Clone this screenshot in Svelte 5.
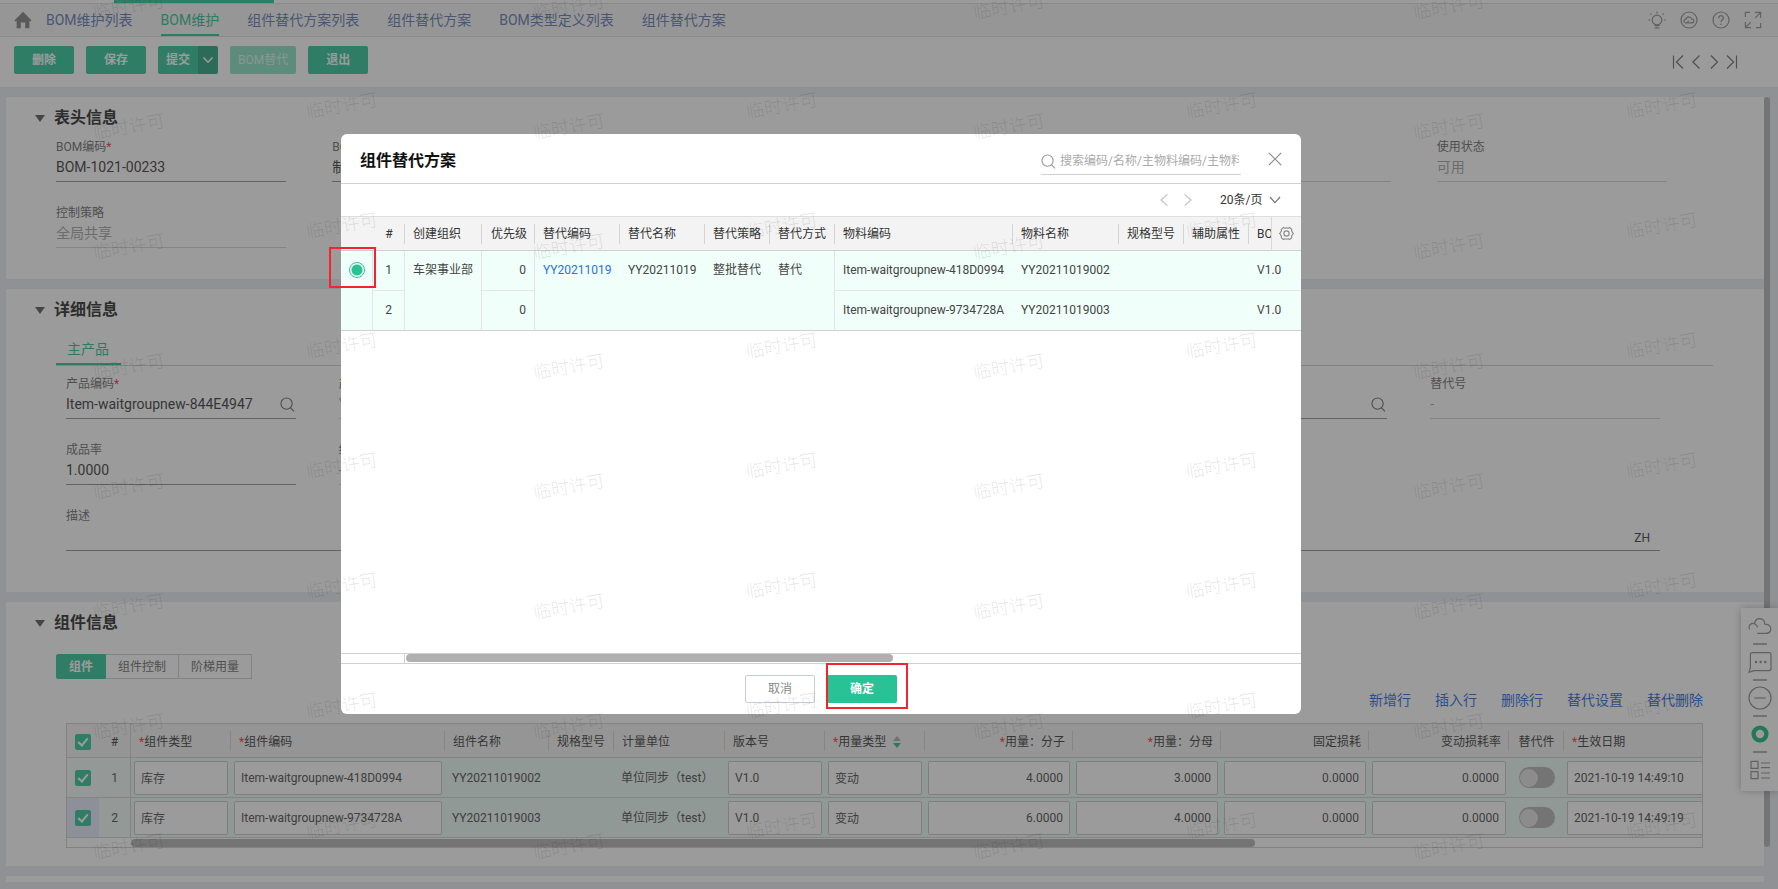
<script>
  let tabs = ['BOM维护列表', 'BOM维护', '组件替代方案列表', '组件替代方案', 'BOM类型定义列表', '组件替代方案']
  let activeTab = 1

  // ── Form fields ───────────────────────────────────────────────────────────

  const headFields = [
    { id: 'bomCode',   label: 'BOM编码',  value: 'BOM-1021-00233', required: true },
    { id: 'bomType',   label: 'BOM类型',  value: '制造BOM' },
    { id: 'org',       label: '创建组织', value: '车架事业部', disabled: true },
    { id: 'version',   label: '版本号',   value: 'V1.0' },
    { id: 'source',    label: '来源',     value: '', disabled: true },
    { id: 'useState',  label: '使用状态', value: '可用', disabled: true },
    { id: 'strategy',  label: '控制策略', value: '全局共享', disabled: true },
  ]

  const productFields = [
    { id: 'prodCode',  label: '产品编码', value: 'Item-waitgroupnew-844E4947', required: true, search: true },
    { id: 'prodName',  label: '产品名称', value: 'YY20211019001', disabled: true },
    { id: 'spec',      label: '规格型号', value: '', disabled: true },
    { id: 'unit',      label: '计量单位', value: '', disabled: true },
    { id: 'prodRoute', label: '工艺路线', value: '', search: true },
    { id: 'altNo',     label: '替代号',   value: '-', disabled: true },
    { id: 'yieldRate', label: '成品率',   value: '1.0000' },
    { id: 'endVer',    label: '终止版本', value: '-', disabled: true },
  ]

  // ── Component grid ────────────────────────────────────────────────────────

  const segments = ['组件', '组件控制', '阶梯用量']
  let activeSegment = '组件'

  const gridActions = ['新增行', '插入行', '删除行', '替代设置', '替代删除']

  const gridWidths = [32, 32, 100, 214, 104, 65, 111, 100, 100, 148, 148, 148, 140, 55]

  let rows = [
    { checked: true, code: 'Item-waitgroupnew-418D0994', name: 'YY20211019002', num: '4.0000', den: '3.0000', date: '2021-10-19 14:49:10', alt: false },
    { checked: true, code: 'Item-waitgroupnew-9734728A', name: 'YY20211019003', num: '6.0000', den: '4.0000', date: '2021-10-19 14:49:19', alt: false },
  ]

  $: allChecked = rows.every(r => r.checked)

  function toggleAll() {
    const next = !allChecked
    rows = rows.map(r => ({ ...r, checked: next }))
  }

  // ── Dialog ────────────────────────────────────────────────────────────────

  const planWidths = [32, 32, 77, 53, 85, 85, 65, 65, 178, 106, 65, 65, 22]
  const planHeads  = ['替代编码', '替代名称', '替代策略', '替代方式', '物料编码', '物料名称', '规格型号', '辅助属性']

  let plan = '1'
  let keyword = ''

  // ── Watermark ─────────────────────────────────────────────────────────────
  // Two interleaved columns repeat every 440px across and 120px down.

  const marks = []
  for (let col = 0; col < 4; col++) {
    for (let row = 0; row < 8; row++) {
      marks.push({ x: 129 + col * 440, y: 7 + row * 120 })
      marks.push({ x: 342 + col * 440, y: 106 + row * 120 })
    }
  }
</script>

{#snippet magnifier()}
  <svg class="magnifier" viewBox="0 0 16 16" aria-hidden="true">
    <circle cx="7" cy="7" r="6" /><path d="M11.2 11.5 15 15.4" />
  </svg>
{/snippet}

{#snippet fieldBox(f)}
  <div class="field" class:disabled={f.disabled}>
    <label for={f.id}>{f.label}{#if f.required}<i>*</i>{/if}</label>
    <div class="field-line">
      <input id={f.id} type="text" value={f.value} disabled={f.disabled} />
      {#if f.search}
        <button class="bare lookup" aria-label="查询">{@render magnifier()}</button>
      {/if}
    </div>
  </div>
{/snippet}

<div class="page">
  <div class="strip"><span></span></div>

  <nav class="tabs">
    <a class="home" href="#home" aria-label="首页">
      <svg viewBox="0 0 18 18"><path d="M9 .8 17.6 9.4 16.4 10.6 15.4 9.8V17.2H11.2V11.6H6.8V17.2H2.6V9.8L1.6 10.6.4 9.4Z" /></svg>
    </a>
    {#each tabs as tab, i}
      <a href="#tab{i}" class="tab" class:active={i === activeTab} on:click|preventDefault={() => (activeTab = i)}>{tab}</a>
    {/each}
    <div class="tools">
      <button class="bare" aria-label="提示">
        <svg viewBox="0 0 18 18"><circle cx="9" cy="9" r="4.8" /><path d="M9 .4V2.4M.4 9H2.2M15.8 9H17.6M2.2 2.4 3.4 3.6M15.8 2.4 14.6 3.6M6.6 14.6H11.4M6.6 16.8H11.4M7 13V14.4M11 13V14.4" /></svg>
      </button>
      <button class="bare" aria-label="云服务">
        <svg viewBox="0 0 18 18"><circle cx="9" cy="9" r="8" /><path d="M4.6 11.6C3.2 10.4 4 8 6 8.2 6.6 5.2 10.8 5.2 11.6 8.2 14.2 7.8 14.6 11.4 12.4 11.8H8.2M8.8 9.8 7 11.8H5" /></svg>
      </button>
      <button class="bare" aria-label="帮助">
        <svg viewBox="0 0 18 18"><circle cx="9" cy="9" r="8" /><path d="M6.6 7.2C6.6 3.8 11.4 4 11.4 7 11.4 8.8 9 8.8 9 11M9 12.6V14" /></svg>
      </button>
      <button class="bare" aria-label="全屏">
        <svg viewBox="0 0 18 18"><path d="M1.4 6V1.4H6M11 1.4H16.6V7M16.4 1.6 11.2 6.8M1.4 11V16.6H7M1.6 16.4 6.8 11.2M16.6 12V16.6H12" /></svg>
      </button>
    </div>
  </nav>

  <div class="toolbar">
    <button class="btn">删除</button>
    <button class="btn">保存</button>
    <div class="split">
      <button class="btn">提交</button>
      <button class="btn more" aria-label="更多提交操作">
        <svg viewBox="0 0 12 8"><path d="M1.5 1.5 6 6.2 10.5 1.5" /></svg>
      </button>
    </div>
    <button class="btn muted" disabled>BOM替代</button>
    <button class="btn">退出</button>
    <div class="record-nav">
      <button class="bare" aria-label="首条"><svg viewBox="0 0 12 14"><path d="M1.5 .5V13.5M11 .5 4.4 7 11 13.5" /></svg></button>
      <button class="bare" aria-label="上一条"><svg viewBox="0 0 12 14"><path d="M9.5 .5 2.9 7 9.5 13.5" /></svg></button>
      <button class="bare" aria-label="下一条"><svg viewBox="0 0 12 14"><path d="M2.9 .5 9.5 7 2.9 13.5" /></svg></button>
      <button class="bare" aria-label="末条"><svg viewBox="0 0 12 14"><path d="M10.5 .5V13.5M1 .5 7.6 7 1 13.5" /></svg></button>
    </div>
  </div>

  <main>
    <div class="cards">
      <section class="card">
        <h2>表头信息</h2>
        <div class="fields head">
          {#each headFields as f}{@render fieldBox(f)}{/each}
        </div>
      </section>

      <section class="card">
        <h2>详细信息</h2>
        <div class="subtabs"><a href="#main-product">主产品</a></div>
        <div class="fields product">
          {#each productFields as f}{@render fieldBox(f)}{/each}
          <div class="field wide">
            <label for="remark">描述</label>
            <div class="field-line">
              <input id="remark" type="text" />
              <button class="bare lang">ZH</button>
            </div>
          </div>
        </div>
      </section>

      <section class="card grid-card">
        <h2>组件信息</h2>
        <div class="segments">
          {#each segments as s}
            <button class:active={s === activeSegment} on:click={() => (activeSegment = s)}>{s}</button>
          {/each}
        </div>
        <div class="grid-actions">
          {#each gridActions as a}<button class="bare">{a}</button>{/each}
        </div>
        <div class="grid-box">
          <table class="grid">
            <colgroup>
              {#each gridWidths as w}<col style="width: {w}px" />{/each}
              <col />
            </colgroup>
            <thead>
              <tr>
                <th class="mid"><input type="checkbox" checked={allChecked} on:change={toggleAll} aria-label="全选" /></th>
                <th class="mid fixed">#</th>
                <th class="sep"><i>*</i>组件类型</th>
                <th class="sep"><i>*</i>组件编码</th>
                <th class="sep">组件名称</th>
                <th class="sep">规格型号</th>
                <th class="sep">计量单位</th>
                <th class="sep">版本号</th>
                <th class="sep"><i>*</i>用量类型
                  <svg class="sort" viewBox="0 0 8 12"><path class="up" d="M4 0 8 5H0Z" /><path class="down" d="M0 7H8L4 12Z" /></svg>
                </th>
                <th class="sep num"><i>*</i>用量：分子</th>
                <th class="sep num"><i>*</i>用量：分母</th>
                <th class="sep num">固定损耗</th>
                <th class="sep num">变动损耗率</th>
                <th class="sep mid">替代件</th>
                <th><i>*</i>生效日期</th>
              </tr>
            </thead>
            <tbody>
              {#each rows as r, i}
                <tr>
                  <td class="mid lock" class:focus={i === 1}><input type="checkbox" bind:checked={r.checked} aria-label="选择第{i + 1}行" /></td>
                  <td class="mid lock fixed">{i + 1}</td>
                  <td class="edit"><input type="text" value="库存" aria-label="组件类型" /></td>
                  <td class="edit"><input type="text" bind:value={r.code} aria-label="组件编码" /></td>
                  <td>{r.name}</td>
                  <td></td>
                  <td>单位同步（test）</td>
                  <td class="edit"><input type="text" value="V1.0" aria-label="版本号" /></td>
                  <td class="edit"><input type="text" value="变动" aria-label="用量类型" /></td>
                  <td class="edit num"><input type="text" bind:value={r.num} aria-label="用量：分子" /></td>
                  <td class="edit num"><input type="text" bind:value={r.den} aria-label="用量：分母" /></td>
                  <td class="edit num"><input type="text" value="0.0000" aria-label="固定损耗" /></td>
                  <td class="edit num"><input type="text" value="0.0000" aria-label="变动损耗率" /></td>
                  <td class="mid"><input class="switch" type="checkbox" role="switch" bind:checked={r.alt} aria-label="替代件" /></td>
                  <td class="edit last"><input type="text" bind:value={r.date} aria-label="生效日期" /></td>
                </tr>
              {/each}
            </tbody>
          </table>
          <div class="hscroll"><span></span></div>
        </div>
      </section>

      <section class="card rest"></section>
    </div>
    <div class="vscroll"><span></span></div>
  </main>

  <aside class="dock">
    <button class="bare" aria-label="云"><svg viewBox="0 0 24 24"><path d="M1.6 15.4C-.2 11.4 3.4 8.2 7 10 8.4 11 9.4 11.8 9.6 13.4M6.4 9.8C7.4 2.6 16.6 3 16.8 10.2 21.4 10 23.4 13 22.6 16 22 18.8 20 19.4 17.6 19.4H9.2" /></svg></button>
    <hr />
    <button class="bare" aria-label="消息"><svg viewBox="0 0 24 24"><path d="M4.4 2.6H21Q23 2.6 23 4.6V18.6Q23 20.6 21 20.6H6L1 22.4 2.4 17.4V4.6Q2.4 2.6 4.4 2.6Z" /><path class="dots" d="M8 12H8.1M12.6 12H12.7M17.2 12H17.3" /></svg></button>
    <hr />
    <button class="bare" aria-label="收起"><svg viewBox="0 0 24 24"><circle cx="12" cy="12" r="11" /><path d="M6.4 12H17.6" /></svg></button>
    <hr />
    <button class="bare" aria-label="状态"><svg viewBox="0 0 24 24"><circle class="ring" cx="12" cy="12" r="6.4" /></svg></button>
    <hr />
    <button class="bare" aria-label="目录"><svg viewBox="0 0 24 24"><path d="M3 3.4H10V10.4H3ZM3 13.6H10V20.6H3ZM13 5H22M13 9.6H22M13 15H22M13 20H22" /></svg></button>
  </aside>

  <div class="mask"></div>

  <div class="dialog" role="dialog" aria-labelledby="dialog-title">
    <header>
      <h1 id="dialog-title">组件替代方案</h1>
      <div class="search">
        {@render magnifier()}
        <input type="text" bind:value={keyword} placeholder="搜索编码/名称/主物料编码/主物料名称" aria-label="搜索" />
      </div>
      <button class="bare close" aria-label="关闭"><svg viewBox="0 0 14 14"><path d="M.8 .8 13.2 13.2M13.2 .8 .8 13.2" /></svg></button>
    </header>

    <div class="pager">
      <button class="bare" disabled aria-label="上一页"><svg viewBox="0 0 8 12"><path d="M7.4 .4 1 6 7.4 11.6" /></svg></button>
      <button class="bare" disabled aria-label="下一页"><svg viewBox="0 0 8 12"><path d="M.6 .4 7 6 .6 11.6" /></svg></button>
      <div class="page-size">
        <select aria-label="每页条数"><option>20条/页</option><option>50条/页</option></select>
        <svg viewBox="0 0 12 8"><path d="M1 1 6 6.6 11 1" /></svg>
      </div>
    </div>

    <div class="plan-box">
      <table class="plan">
        <colgroup>
          {#each planWidths as w}<col style="width: {w}px" />{/each}
          <col />
        </colgroup>
        <thead>
          <tr>
            <th></th>
            <th class="sep mid">#</th>
            <th class="sep">创建组织</th>
            <th class="sep num">优先级</th>
            {#each planHeads as h}<th class="sep">{h}</th>{/each}
            <th class="cut">BOM</th>
            <th class="gear">
              <button class="bare" aria-label="列设置">
                <svg viewBox="0 0 16 16"><path d="M4.6 1.6 6 2.4Q8 1.6 10 2.4L11.4 1.6 13.6 3.6 13.4 5.2Q14.2 6 14.4 7L15.4 8 14.4 9Q14.2 10 13.4 10.8L13.6 12.4 11.4 14.4 10 13.6Q8 14.4 6 13.6L4.6 14.4 2.4 12.4 2.6 10.8Q1.8 10 1.6 9L.6 8 1.6 7Q1.8 6 2.6 5.2L2.4 3.6Z" /><circle cx="8" cy="8" r="2.8" /></svg>
              </button>
            </th>
          </tr>
        </thead>
        <tbody>
          <tr>
            <td rowspan="2" class="mid line end"><input type="radio" name="plan" value="1" bind:group={plan} aria-label="选择方案YY20211019" /></td>
            <td class="mid line">1</td>
            <td rowspan="2" class="line end">车架事业部</td>
            <td class="num line">0</td>
            <td rowspan="2" class="end"><a href="#plan">YY20211019</a></td>
            <td rowspan="2" class="end">YY20211019</td>
            <td rowspan="2" class="end">整批替代</td>
            <td rowspan="2" class="line end">替代</td>
            <td>Item-waitgroupnew-418D0994</td>
            <td>YY20211019002</td>
            <td></td>
            <td></td>
            <td colspan="2">V1.0</td>
          </tr>
          <tr class="end">
            <td class="mid line">2</td>
            <td class="num line">0</td>
            <td>Item-waitgroupnew-9734728A</td>
            <td>YY20211019003</td>
            <td></td>
            <td></td>
            <td colspan="2">V1.0</td>
          </tr>
        </tbody>
      </table>
    </div>
    <div class="plan-scroll"><div></div><span></span></div>

    <footer>
      <button class="btn cancel">取消</button>
      <div class="confirm">
        <button class="btn">确定</button>
        <span class="frame frame-ok"></span>
      </div>
    </footer>
    <span class="frame frame-radio"></span>
  </div>

  <svg class="watermark" aria-hidden="true">
    {#each marks as m}
      <text transform="translate({m.x} {m.y}) rotate(-10)" text-anchor="middle" dy="6">临时许可</text>
    {/each}
  </svg>
</div>

<style>
  :global(body) {
    margin:      0;
    background:  #e9ebf2;
    font-family: Roboto, "Noto Sans CJK SC", sans-serif;
    font-size:   12px;
    line-height: 20px;
    color:       #333;
  }

  .page {
    position:       relative;
    display:        flex;
    flex-direction: column;
    min-height:     100vh;
    overflow:       hidden;
  }

  button, input, select {
    box-sizing:  border-box;
    margin:      0;
    font-family: inherit;
    font-size:   12px;
    line-height: 20px;
    color:       inherit;
    outline:     none;
  }

  button { cursor: pointer; }

  .bare {
    display:    flex;
    padding:    0;
    border:     0;
    background: none;
  }

  a { text-decoration: none; }

  i {
    font-style: normal;
    color:      #f22c2c;
  }

  svg {
    display:      block;
    fill:         none;
    stroke:       #8a8a8a;
    stroke-width: 1.2;
  }

  /* ── Top strip and tabs ── */

  .strip {
    height:        3px;
    background:    #fff;
    border-bottom: 1px solid #dcdcdc;
  }

  .strip span {
    display:     block;
    width:       160px;
    height:      3px;
    margin-left: 114px;
    background:  #28c294;
  }

  .tabs {
    display:       flex;
    align-items:   center;
    gap:           28px;
    height:        32px;
    padding:       0 16px 0 14px;
    background:    #f5f5f5;
    border-bottom: 1px solid #dcdcdc;
  }

  .home { margin-right: -14px; }

  .home svg {
    width:  18px;
    height: 18px;
    fill:   #7c7c7c;
    stroke: none;
  }

  .tab {
    height:        29px;
    border-bottom: 2px solid transparent;
    font-size:     14px;
    line-height:   30px;
    color:         #5a76b0;
    white-space:   nowrap;
  }

  .tab.active {
    border-color: #28c294;
    color:        #1fbc8c;
  }

  .tools {
    display:     flex;
    gap:         14px;
    margin-left: auto;
  }

  .tools svg { width: 18px; height: 18px; }

  /* ── Toolbar ── */

  .toolbar {
    display:     flex;
    align-items: center;
    gap:         12px;
    height:      46px;
    padding:     0 40px 4px 14px;
    background:  #fff;
  }

  .btn {
    min-width:     60px;
    height:        28px;
    padding:       0 8px;
    border:        0;
    border-radius: 2px;
    background:    #28c294;
    color:         #fff;
    font-weight:   700;
    white-space:   nowrap;
  }

  .btn.muted {
    background:  #83e0c2;
    color:       #d8f6ec;
    font-weight: 400;
  }

  .split { display: flex; }

  .split .btn {
    min-width:     40px;
    border-radius: 2px 0 0 2px;
  }

  .split .more {
    min-width:     20px;
    padding:       0 4px;
    border-radius: 0 2px 2px 0;
    background:    #219f79;
  }

  .more svg { width: 12px; height: 8px; stroke: #fff; stroke-width: 1.6; }

  .record-nav {
    display:     flex;
    gap:         6px;
    margin-left: auto;
    padding-top: 4px;
  }

  .record-nav svg { width: 12px; height: 14px; stroke: #666; }

  /* ── Cards ── */

  main {
    display: flex;
    flex:    1;
    padding: 10px 8px 7px 6px;
  }

  .cards {
    display:        flex;
    flex:           1;
    flex-direction: column;
    gap:            10px;
    min-width:      0;
  }

  .vscroll { width: 6px; }

  .vscroll span {
    display:       block;
    height:        750px;
    border-radius: 3px;
    background:    #b0b0b0;
  }

  .card {
    padding:    11px 51px 10px 50px;
    background: #fff;
  }

  .rest {
    flex:    1;
    padding: 0 0 5px;
  }

  h2 {
    display:     flex;
    align-items: center;
    gap:         9px;
    margin:      0 0 9px -21px;
    font-size:   16px;
    font-weight: 700;
    line-height: 20px;
    color:       #222;
  }

  h2::before {
    content:      "";
    border:       solid transparent;
    border-width: 7px 5px 0;
    border-top-color: #555;
  }

  .fields {
    display:               grid;
    grid-template-columns: repeat(6, 1fr);
  }

  .fields.head { --gap: 46px; }

  .fields.product {
    --gap:   43px;
    padding: 0 10px 10px;
  }

  .field {
    min-width: 0;
    height:    66px;
    padding-right: var(--gap);
  }

  .field.wide { grid-column: 1 / -1; }

  .field label {
    display: block;
    color:   #666;
    white-space: nowrap;
  }

  .field-line {
    display:       flex;
    align-items:   center;
    height:        24px;
    border-bottom: 1px solid #8c8c8c;
  }

  .field-line input {
    flex:       1;
    min-width:  0;
    height:     20px;
    padding:    0;
    margin-bottom: 4px;
    border:     0;
    background: none;
    font-size:  14px;
    color:      #333;
  }

  .disabled .field-line       { border-color: #d0d0d0; }
  .disabled .field-line input { color: #a0a0a0; }

  .magnifier {
    width:  15px;
    height: 15px;
    stroke: #666;
  }

  .lookup { margin: 0 1px 4px 0; }

  .lang {
    margin-right: 10px;
    color:        #333;
  }

  .subtabs {
    display:       flex;
    height:        36px;
    margin-bottom: 8px;
    border-bottom: 1px solid #ccc;
  }

  .subtabs a {
    padding:       0 12px 0 11px;
    border-bottom: 2px solid #28c294;
    font-size:     14px;
    line-height:   40px;
    color:         #1fbc8c;
  }

  /* ── Component grid ── */

  .grid-card { padding-bottom: 18px; }

  .segments {
    display:     flex;
    margin-top:  21px;
  }

  .segments button {
    height:      25px;
    padding:     0 12px;
    border:      1px solid #ccc;
    border-left: 0;
    background:  #fff;
    color:       #666;
  }

  .segments .active {
    border-left:   1px solid;
    border-color:  #28c294;
    border-radius: 2px 0 0 2px;
    background:    #28c294;
    color:         #fff;
    font-weight:   700;
  }

  .grid-actions {
    display:         flex;
    justify-content: flex-end;
    gap:             24px;
    margin:          11px 10px 13px;
  }

  .grid-actions button {
    font-size: 14px;
    color:     #1f66dc;
  }

  .grid-box {
    margin:   0 10px;
    border:   1px solid #ccc;
    overflow: hidden;
  }

  table {
    width:           100%;
    table-layout:    fixed;
    border-collapse: separate;
    border-spacing:  0;
  }

  th, td {
    box-sizing:    border-box;
    padding:       0 8px;
    border-bottom: 1px solid #d0d0d0;
    text-align:    left;
    font-weight:   400;
    white-space:   nowrap;
  }

  th {
    position:   relative;
    height:     34px;
    background: #f3f3f3;
    color:      #333;
  }

  th.sep::after {
    content:    "";
    position:   absolute;
    top:        7px;
    right:      0;
    width:      1px;
    height:     20px;
    background: #d4d4d4;
  }

  th.mid, td.mid { padding: 0; text-align: center; }
  th.num, td.num { text-align: right; }

  .grid th { padding-top: 2px; }
  .grid th.fixed, .grid td.fixed { border-right: 1px solid #d0d0d0; }

  .grid td {
    height:       40px;
    padding-left: 7px;
    background:   #ebfaf4;
    color:        #444;
  }

  .grid td.mid   { padding: 0; }
  .grid td.lock  { background: #f0fbf7; }
  .grid td.focus { background: #e3e8fa; }

  .grid td.edit { padding: 0 3px; }
  .grid td.last { padding-right: 0; }

  .grid input[type="text"] {
    display:       block;
    width:         100%;
    height:        34px;
    padding:       0 6px;
    border:        1px solid #c4c4c4;
    border-radius: 2px;
    background:    #fff;
  }

  .grid .num input  { text-align: right; }
  .grid .last input[type="text"] { border-right: 0; border-radius: 2px 0 0 2px; }

  .sort {
    display:        inline-block;
    width:          8px;
    height:         12px;
    margin-left:    4px;
    vertical-align: -2px;
    stroke:         none;
  }

  .sort .up   { fill: #aaa; }
  .sort .down { fill: #28b78b; }

  input[type="checkbox"] {
    display:        block;
    width:          16px;
    height:         16px;
    margin:         0 auto;
    border:         1px solid #bbb;
    border-radius:  2px;
    background:     #fff;
    appearance:     none;
  }

  input[type="checkbox"]:checked {
    border-color: #28c294;
    background:   #28c294;
  }

  input[type="checkbox"]:not(.switch):checked::after {
    content:      "";
    display:      block;
    width:        4px;
    height:       8px;
    margin:       1px 0 0 4px;
    border:       solid #fff;
    border-width: 0 2px 2px 0;
    transform:    rotate(40deg);
  }

  input.switch {
    width:         36px;
    height:        21px;
    border:        0;
    border-radius: 11px;
    background:    #b0b0b0;
  }

  input.switch::before {
    content:       "";
    display:       block;
    width:         18px;
    height:        18px;
    border-radius: 50%;
    background:    #e0e0e0;
    transform:     translate(1px, 2px);
  }

  input.switch:checked::before { transform: translate(17px, 2px); }

  .hscroll {
    height:  9px;
    padding: 1px 0 0 64px;
    box-sizing: border-box;
  }

  .hscroll span {
    display:       block;
    width:         1124px;
    height:        8px;
    border-radius: 4px;
    background:    #b0b0b0;
  }

  /* ── Right dock ── */

  .dock {
    position:       absolute;
    top:            608px;
    right:          0;
    display:        flex;
    flex-direction: column;
    align-items:    center;
    gap:            5px;
    box-sizing:     border-box;
    width:          37px;
    padding:        6px 4px 9px;
    background:     #fff;
    box-shadow:     0 0 8px rgba(0, 0, 0, 0.3);
  }

  .dock svg   { width: 24px; height: 24px; }
  .dock .dots { stroke-width: 2.4; stroke-linecap: round; }
  .dock .ring { stroke: #12b877; stroke-width: 4.4; }

  .dock hr {
    width:      14px;
    height:     2px;
    margin:     0;
    border:     0;
    background: #aaa;
  }

  /* ── Dialog ── */

  .mask {
    position:   absolute;
    inset:      0;
    background: rgba(55, 55, 55, 0.5);
  }

  .dialog {
    position:       absolute;
    top:            134px;
    left:           341px;
    display:        flex;
    flex-direction: column;
    width:          54%;
    border-radius:  6px;
    background:     #fff;
  }

  header {
    display:       flex;
    align-items:   center;
    height:        49px;
    padding:       0 19px 0 19px;
    border-bottom: 1px solid #d0d0d0;
  }

  h1 {
    margin:      4px auto 0 0;
    font-size:   16px;
    font-weight: 700;
    line-height: 20px;
    color:       #111;
  }

  .search {
    display:       flex;
    align-items:   center;
    gap:           4px;
    width:         200px;
    height:        26px;
    margin-top:    6px;
    border-bottom: 1px solid #d0d0d0;
  }

  .search .magnifier { stroke: #999; flex-shrink: 0; }

  .search input {
    flex:       1;
    min-width:  0;
    height:     24px;
    padding:    0 2px 0 0;
    border:     0;
    background: none;
  }

  .search input::placeholder { color: #aaa; }

  .close { margin-left: 27px; }
  .close svg { width: 14px; height: 14px; }

  .pager {
    display:         flex;
    align-items:     center;
    justify-content: flex-end;
    gap:             16px;
    height:          32px;
    padding-right:   20px;
  }

  .pager svg { width: 8px; height: 12px; stroke: #c4c4c4; }

  .page-size {
    display:     flex;
    align-items: center;
    gap:         6px;
    margin-left: 12px;
  }

  .page-size svg { width: 12px; height: 8px; stroke: #777; }

  .page-size select {
    padding:    0;
    border:     0;
    background: none;
    appearance: none;
  }

  .plan-box {
    min-height: 436px;
    border-top: 1px solid #dedede;
    overflow:   hidden;
  }

  .plan td {
    height:         40px;
    padding-top:    9px;
    background:     #f0fff9;
    border-bottom:  1px solid #e6e6e6;
    vertical-align: top;
    color:          #444;
  }

  .plan td.line    { border-right: 1px solid #e3e3ea; }
  .plan td.end,
  .plan .end td    { border-bottom-color: #d0d0d0; }
  .plan a          { color: #2b6fe3; }
  .plan th.cut     { padding-right: 0; overflow: hidden; }
  .plan th.gear    { padding: 0 0 0 7px; border-left: 1px solid #d8d8d8; }
  .gear svg        { width: 15px; height: 15px; }

  input[type="radio"] {
    display:       block;
    width:         16px;
    height:        16px;
    margin:        2px auto 0;
    border:        1px solid #28c294;
    border-radius: 50%;
    appearance:    none;
  }

  input[type="radio"]:checked {
    background: radial-gradient(circle, #28c294 5px, #fff 6px);
  }

  .plan-scroll {
    display:      flex;
    height:       9px;
    border:       solid #d0d0d0;
    border-width: 1px 0;
  }

  .plan-scroll div {
    box-sizing:   border-box;
    width:        64px;
    height:       9px;
    border-right: 1px solid #d0d0d0;
  }

  .plan-scroll span {
    width:         487px;
    height:        8px;
    margin-left:   1px;
    border-radius: 4px;
    background:    #b0b0b0;
  }

  footer {
    display:         flex;
    align-items:     center;
    justify-content: center;
    gap:             12px;
    height:          50px;
  }

  footer .btn { min-width: 70px; }

  .btn.cancel {
    border:      1px solid #c8ccd4;
    background:  #fff;
    color:       #888;
    font-weight: 400;
  }

  .confirm { position: relative; }

  .frame {
    position:       absolute;
    border:         2px solid #f0262c;
    pointer-events: none;
  }

  .frame-ok    { inset: -12px -11px -6px -1px; }
  .frame-radio { top: 113px; left: -12px; width: 43px; height: 37px; }

  .watermark {
    position:       absolute;
    inset:          0;
    width:          100%;
    height:         100%;
    pointer-events: none;
  }

  .watermark text {
    fill:        rgba(0, 0, 0, 0.12);
    stroke:      none;
    font-size:   18px;
    font-weight: 300;
  }
</style>
